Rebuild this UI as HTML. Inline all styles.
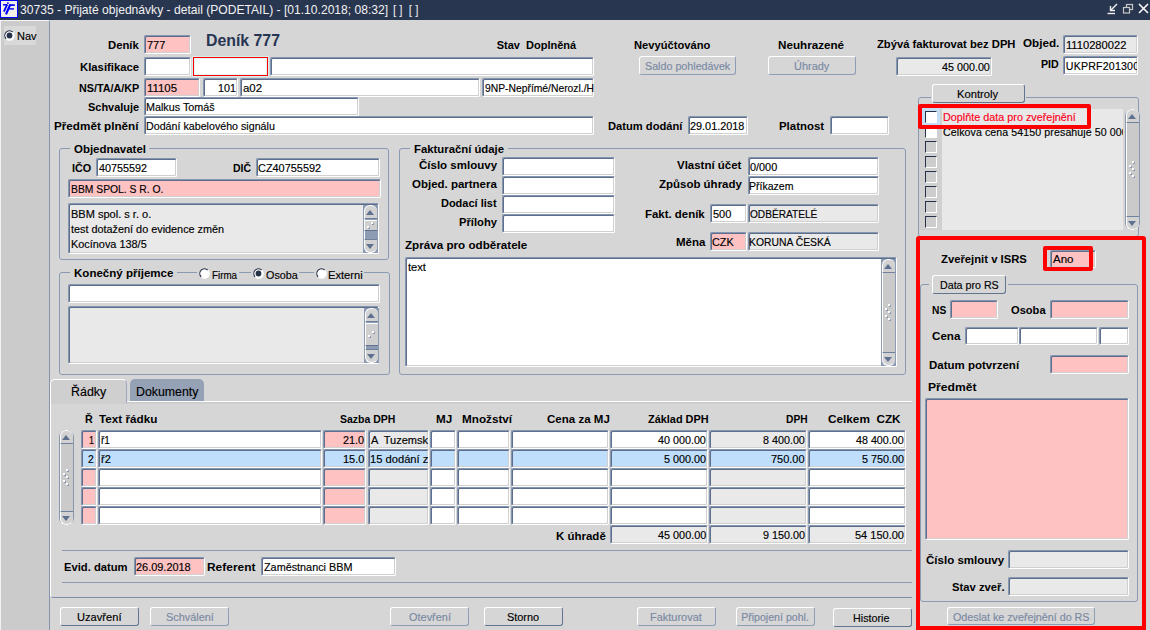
<!DOCTYPE html><html><head><meta charset='utf-8'><style>
*{margin:0;padding:0}
html,body{width:1150px;height:630px;overflow:hidden;background:#d6d6d6;font-family:'Liberation Sans', sans-serif;}
.t{position:absolute;white-space:pre;line-height:13px;font-size:11px;-webkit-text-stroke:0.15px currentColor}
.in{position:absolute;box-sizing:border-box;border-top:1px solid #8696ae;border-left:1px solid #8696ae;border-right:1px solid #fff;border-bottom:1px solid #fff;border-radius:2px;overflow:hidden;box-shadow:inset 1px 1px 0 #5d6f8c, inset -1px -1px 0 #d0d0d0}
.it{position:absolute;left:0;right:0;white-space:pre;font-size:10.6px;line-height:13px;overflow:hidden}
.bt{position:absolute;box-sizing:border-box;border:1px solid #7d8ca6;border-top-color:#fff;border-left-color:#fff;border-radius:3px;background:#d6d6d6}
.bx{position:absolute;left:0;right:0;text-align:center;white-space:pre;font-size:10.8px;line-height:13px}
.grp{position:absolute;box-sizing:border-box;border:1px solid #8a9ab2;border-radius:3px}
</style></head><body><div style="position:absolute;left:0;top:0;width:1150px;height:20px;background:#293650"></div>
<svg style="position:absolute;left:0;top:0" width="19" height="19" viewBox="0 0 19 19">
<rect x="0.5" y="0.5" width="17" height="17" fill="#f3f1e7" stroke="#0000ff" stroke-width="1"/>
<circle cx="7.9" cy="3.1" r="0.95" fill="#0000e8"/>
<g stroke="#0000ff" stroke-linecap="butt" fill="none">
<line x1="3" y1="4.8" x2="7.4" y2="4.8" stroke-width="1.5"/>
<line x1="7.1" y1="4.6" x2="3.9" y2="11.6" stroke-width="1.9"/>
<line x1="10.3" y1="4.4" x2="6.0" y2="14.4" stroke-width="2.2"/>
<line x1="9.2" y1="5.1" x2="14.8" y2="5.1" stroke-width="1.7"/>
<line x1="7.9" y1="8.9" x2="14.0" y2="8.9" stroke-width="1.4"/>
</g></svg>
<div class="t" style="left:19.95px;top:4px;font-weight:normal;font-size:12.2px;color:#f2f2f2;transform:scaleX(0.9923);transform-origin:0 0;-webkit-text-stroke:0">30735 - Přijaté objednávky - detail (PODETAIL) - [01.10.2018; 08:32]</div>
<div class="t" style="left:393.40px;top:4px;font-weight:normal;font-size:12.2px;color:#f2f2f2;transform:scaleX(0.9370);transform-origin:0 0;-webkit-text-stroke:0">[ ]  [ ]</div>
<svg style="position:absolute;left:1100px;top:0" width="50" height="20" viewBox="0 0 50 20">
<g stroke="#f0f0f0" fill="none" stroke-width="1.4">
<line x1="7.5" y1="13.5" x2="15" y2="13.5"/><line x1="17" y1="4" x2="11" y2="10"/><polyline points="10.5,6 10.5,10.5 15,10.5"/>
</g>
<g stroke="#c8c8c8" fill="none" stroke-width="1.2">
<rect x="26.5" y="4.5" width="6" height="5"/><rect x="23.5" y="7.5" width="6" height="5.5" fill="#293650"/>
</g>
<g stroke="#f8f8f8" stroke-width="1.6"><line x1="39" y1="4" x2="48" y2="13"/><line x1="48" y1="4" x2="39" y2="13"/></g>
</svg>
<div style="position:absolute;left:0;top:20px;width:50px;height:610px;box-sizing:border-box;background:#cbcbcb;border-right:1px solid #8395b0;border-top:1px solid #f4f4f4;border-left:1px solid #f2f2f2"></div>
<div style="position:absolute;left:4px;top:26px;width:32px;height:19px;background:#d9d9d9"></div>
<svg style="position:absolute;left:4px;top:30px" width="11" height="11" viewBox="0 0 11 11"><circle cx="5.5" cy="5.5" r="4.6" fill="#fff"/><path d="M 2.2 8.8 A 4.6 4.6 0 0 1 8.8 2.2" stroke="#1f2a40" stroke-width="1.1" fill="none"/><path d="M 8.8 2.2 A 4.6 4.6 0 0 1 2.2 8.8" stroke="#fff" stroke-width="1.1" fill="none"/><circle cx="5.5" cy="5.5" r="2.9" fill="#263248"/></svg>
<div class="t" style="left:17px;top:30px;font-weight:normal;font-size:11px;color:#000;">Nav</div>
<div class="t" style="left:107.63px;top:39px;font-weight:bold;font-size:11px;color:#000;transform:scaleX(1.0274);transform-origin:0 0;-webkit-text-stroke:0;">Deník</div>
<div class="t" style="left:79.63px;top:61px;font-weight:bold;font-size:11px;color:#000;transform:scaleX(1.0293);transform-origin:0 0;-webkit-text-stroke:0;">Klasifikace</div>
<div class="t" style="left:78.67px;top:82px;font-weight:bold;font-size:11px;color:#000;transform:scaleX(0.9768);transform-origin:0 0;-webkit-text-stroke:0;">NS/TA/A/KP</div>
<div class="t" style="left:87.70px;top:101px;font-weight:bold;font-size:11px;color:#000;transform:scaleX(0.9941);transform-origin:0 0;-webkit-text-stroke:0;">Schvaluje</div>
<div class="t" style="left:53.60px;top:120px;font-weight:bold;font-size:11px;color:#000;transform:scaleX(1.0633);transform-origin:0 0;-webkit-text-stroke:0;">Předmět plnění</div>
<div class="in" style="left:144px;top:35px;width:47px;height:19px;background:#fec2c2;"></div>
<div class="t" style="left:146.73px;top:39px;font-weight:normal;font-size:10.6px;color:#000;transform:scaleX(1.0361);transform-origin:0 0;">777</div>
<div class="in" style="left:144px;top:57px;width:47px;height:19px;background:#fff;"></div>
<div style="position:absolute;left:193px;top:57px;width:75px;height:19px;box-sizing:border-box;border:1px solid #f00;background:#fff;box-shadow:0 0 0 1px #d8ecec, inset 0 0 0 1px #e4f4f4"></div>
<div class="in" style="left:270px;top:57px;width:324px;height:19px;background:#fff;"></div>
<div class="in" style="left:144px;top:78px;width:56px;height:19px;background:#fec2c2;"></div>
<div class="t" style="left:146.84px;top:82px;font-weight:normal;font-size:10.6px;color:#000;transform:scaleX(1.0769);transform-origin:0 0;">11105</div>
<div class="in" style="left:203px;top:78px;width:35px;height:19px;background:#fff;"></div>
<div class="t" style="left:218.19px;top:82px;font-weight:normal;font-size:10.6px;color:#000;transform:scaleX(1.0122);transform-origin:0 0;">101</div>
<div class="in" style="left:240px;top:78px;width:240px;height:19px;background:#fff;"></div>
<div class="t" style="left:242.51px;top:82px;font-weight:normal;font-size:10.6px;color:#000;transform:scaleX(1.0778);transform-origin:0 0;">a02</div>
<div class="in" style="left:482px;top:78px;width:112px;height:19px;background:#fff;"></div>
<div class="t" style="left:484.51px;top:82px;font-weight:normal;font-size:10.6px;color:#000;transform:scaleX(0.9742);transform-origin:0 0;">9NP-Nepřímé/Nerozl./H</div>
<div class="in" style="left:144px;top:97px;width:215px;height:19px;background:#fff;"></div>
<div class="t" style="left:146.14px;top:101px;font-weight:normal;font-size:10.6px;color:#000;transform:scaleX(1.0166);transform-origin:0 0;">Malkus Tomáš</div>
<div class="in" style="left:144px;top:116px;width:450px;height:19px;background:#fff;"></div>
<div class="t" style="left:146.14px;top:120px;font-weight:normal;font-size:10.6px;color:#000;transform:scaleX(1.0083);transform-origin:0 0;">Dodání kabelového signálu</div>
<div class="t" style="left:205.5px;top:34px;font-weight:bold;font-size:16px;color:#283552;transform:scaleX(0.99);transform-origin:0 0;-webkit-text-stroke:0">Deník 777</div>
<div class="t" style="left:496.70px;top:39px;font-weight:bold;font-size:11px;color:#000;-webkit-text-stroke:0;">Stav  Doplněná</div>
<div class="t" style="left:633.64px;top:39px;font-weight:bold;font-size:11px;color:#000;transform:scaleX(1.0162);transform-origin:0 0;-webkit-text-stroke:0;">Nevyúčtováno</div>
<div class="t" style="left:777.81px;top:39px;font-weight:bold;font-size:11px;color:#000;transform:scaleX(1.0596);transform-origin:0 0;-webkit-text-stroke:0;">Neuhrazené</div>
<div class="t" style="left:876.69px;top:38px;font-weight:bold;font-size:11px;color:#000;transform:scaleX(1.0204);transform-origin:0 0;-webkit-text-stroke:0;">Zbývá fakturovat bez DPH</div>
<div class="t" style="left:1022.52px;top:37px;font-weight:bold;font-size:11px;color:#000;transform:scaleX(1.0606);transform-origin:0 0;-webkit-text-stroke:0;">Objed.</div>
<div class="t" style="left:1040.67px;top:58px;font-weight:bold;font-size:11px;color:#000;transform:scaleX(0.9679);transform-origin:0 0;-webkit-text-stroke:0;">PID</div>
<div class="in" style="left:1063px;top:35px;width:75px;height:19px;background:#e9e9e9;"></div>
<div class="t" style="left:1065.76px;top:39px;font-weight:normal;font-size:10.6px;color:#000;transform:scaleX(1.0526);transform-origin:0 0;">1110280022</div>
<div class="in" style="left:1063px;top:56px;width:75px;height:19px;background:#fff;"></div>
<div style="position:absolute;left:1065px;top:58px;width:72px;height:16px;overflow:hidden"><div style="position:absolute;left:-1065px;top:-58px;width:1150px;height:630px"><div class="t" style="left:1065.80px;top:60px;font-weight:normal;font-size:10.6px;color:#000;letter-spacing:0.2px">UKPRF20130001</div></div></div>
<div class="bt" style="left:639px;top:56px;width:97px;height:19px;border-right-color:#8d9db5;border-bottom-color:#8d9db5"><div class="bx" style="top:4px;color:#7a89a3"></div></div>
<div class="t" style="left:645.09px;top:60px;font-weight:normal;font-size:10.6px;color:#7a89a3;transform:scaleX(1.0119);transform-origin:0 0;">Saldo pohledávek</div>
<div class="bt" style="left:768px;top:56px;width:88px;height:19px;border-right-color:#8d9db5;border-bottom-color:#8d9db5"><div class="bx" style="top:4px;color:#7a89a3"></div></div>
<div class="t" style="left:793.57px;top:60px;font-weight:normal;font-size:10.6px;color:#7a89a3;transform:scaleX(1.0345);transform-origin:0 0;">Úhrady</div>
<div class="in" style="left:896px;top:57px;width:96px;height:19px;background:#e9e9e9;"></div>
<div class="t" style="left:942.15px;top:61px;font-weight:normal;font-size:10.6px;color:#000;transform:scaleX(1.0151);transform-origin:0 0;">45 000.00</div>
<div class="t" style="left:607.64px;top:120px;font-weight:bold;font-size:11px;color:#000;transform:scaleX(1.0151);transform-origin:0 0;-webkit-text-stroke:0;">Datum dodání</div>
<div class="in" style="left:688px;top:116px;width:60px;height:19px;background:#fff;"></div>
<div class="t" style="left:690.44px;top:120px;font-weight:normal;font-size:10.6px;color:#000;transform:scaleX(1.0259);transform-origin:0 0;">29.01.2018</div>
<div class="t" style="left:778.62px;top:120px;font-weight:bold;font-size:11px;color:#000;transform:scaleX(1.0388);transform-origin:0 0;-webkit-text-stroke:0;">Platnost</div>
<div class="in" style="left:830px;top:116px;width:59px;height:19px;background:#fff;"></div>
<div class="grp" style="left:59px;top:148px;width:330px;height:112px"></div>
<div style="position:absolute;left:70px;top:147px;width:79px;height:3px;background:#d6d6d6"></div>
<div class="t" style="left:73.63px;top:143px;font-weight:bold;font-size:11px;color:#000;transform:scaleX(1.0420);transform-origin:0 0;-webkit-text-stroke:0;">Objednavatel</div>
<div class="t" style="left:72.26px;top:162px;font-weight:bold;font-size:11px;color:#000;transform:scaleX(0.9864);transform-origin:0 0;-webkit-text-stroke:0;">IČO</div>
<div class="in" style="left:96px;top:158px;width:81px;height:19px;background:#fff;"></div>
<div class="t" style="left:99.14px;top:162px;font-weight:normal;font-size:10.6px;color:#000;transform:scaleX(1.0205);transform-origin:0 0;">40755592</div>
<div class="t" style="left:233.29px;top:162px;font-weight:bold;font-size:11px;color:#000;transform:scaleX(0.9497);transform-origin:0 0;-webkit-text-stroke:0;">DIČ</div>
<div class="in" style="left:256px;top:158px;width:124px;height:19px;background:#fff;"></div>
<div class="t" style="left:258.43px;top:162px;font-weight:normal;font-size:10.6px;color:#000;transform:scaleX(1.0299);transform-origin:0 0;">CZ40755592</div>
<div class="in" style="left:68px;top:179px;width:313px;height:19px;background:#fec2c2;"></div>
<div class="t" style="left:70.57px;top:183px;font-weight:normal;font-size:10.6px;color:#000;transform:scaleX(0.9758);transform-origin:0 0;">BBM SPOL. S R. O.</div>
<div class="in" style="left:68px;top:203px;width:311px;height:51px;background:#e9e9e9;"></div>
<div class="t" style="left:70.72px;top:208px;font-weight:normal;font-size:10.6px;color:#000;transform:scaleX(1.0398);transform-origin:0 0;">BBM spol. s r. o.</div>
<div class="t" style="left:71.45px;top:223px;font-weight:normal;font-size:10.6px;color:#000;transform:scaleX(1.0238);transform-origin:0 0;">test dotažení do evidence změn</div>
<div class="t" style="left:70.73px;top:238px;font-weight:normal;font-size:10.6px;color:#000;transform:scaleX(1.0283);transform-origin:0 0;">Kocínova 138/5</div>
<div style="position:absolute;left:363px;top:205px;width:15px;height:48px;background:#8d9bb3"></div>
<div style="position:absolute;left:364px;top:218px;width:13px;height:22px;box-sizing:border-box;background:#8d9bb3;border-left:1px solid #fff"></div>
<div style="position:absolute;left:364px;top:205px;width:13px;height:14px;box-sizing:border-box;background:#d2d2d2;border-top:1px solid #fff;border-left:1px solid #fff;border-bottom:1px solid #6f809c;border-radius:6px 6px 0 0"></div>
<div style="position:absolute;left:366px;top:210px;width:0;height:0;border-left:4.5px solid transparent;border-right:4.5px solid transparent;border-bottom:5px solid #5f7190"></div>
<div style="position:absolute;left:364px;top:239px;width:13px;height:14px;box-sizing:border-box;background:#d2d2d2;border-top:1px solid #6f809c;border-left:1px solid #fff;border-bottom:1px solid #fff;border-radius:0 0 6px 6px"></div>
<div style="position:absolute;left:366px;top:244px;width:0;height:0;border-left:4.5px solid transparent;border-right:4.5px solid transparent;border-top:5px solid #5f7190"></div>
<div style="position:absolute;left:364px;top:220px;width:13px;height:11px;box-sizing:border-box;background:#cfcfcf;border-top:1px solid #fff;border-left:1px solid #fff;border-bottom:1px solid #5f7190"></div>
<div style="position:absolute;left:367px;top:226px;width:2px;height:2px;background:#fff;box-shadow:1px 1px 0 #8d9bb3"></div>
<div style="position:absolute;left:371px;top:222px;width:2px;height:2px;background:#fff;box-shadow:1px 1px 0 #8d9bb3"></div>
<div class="grp" style="left:59px;top:272px;width:331px;height:103px"></div>
<div style="position:absolute;left:70px;top:271px;width:107px;height:3px;background:#d6d6d6"></div>
<div style="position:absolute;left:197px;top:271px;width:42px;height:3px;background:#d6d6d6"></div>
<div style="position:absolute;left:251px;top:271px;width:48px;height:3px;background:#d6d6d6"></div>
<div style="position:absolute;left:314px;top:271px;width:50px;height:3px;background:#d6d6d6"></div>
<div class="t" style="left:73.61px;top:267px;font-weight:bold;font-size:11px;color:#000;transform:scaleX(1.0497);transform-origin:0 0;-webkit-text-stroke:0;">Konečný příjemce</div>
<svg style="position:absolute;left:199px;top:268px" width="11" height="11" viewBox="0 0 11 11"><circle cx="5.5" cy="5.5" r="4.6" fill="#fff"/><path d="M 2.2 8.8 A 4.6 4.6 0 0 1 8.8 2.2" stroke="#1f2a40" stroke-width="1.1" fill="none"/><path d="M 8.8 2.2 A 4.6 4.6 0 0 1 2.2 8.8" stroke="#fff" stroke-width="1.1" fill="none"/></svg>
<div class="t" style="left:211.91px;top:269px;font-weight:normal;font-size:10.6px;color:#000;transform:scaleX(0.9257);transform-origin:0 0;">Firma</div>
<svg style="position:absolute;left:253px;top:268px" width="11" height="11" viewBox="0 0 11 11"><circle cx="5.5" cy="5.5" r="4.6" fill="#fff"/><path d="M 2.2 8.8 A 4.6 4.6 0 0 1 8.8 2.2" stroke="#1f2a40" stroke-width="1.1" fill="none"/><path d="M 8.8 2.2 A 4.6 4.6 0 0 1 2.2 8.8" stroke="#fff" stroke-width="1.1" fill="none"/><circle cx="5.5" cy="5.5" r="2.9" fill="#263248"/></svg>
<div class="t" style="left:265.89px;top:269px;font-weight:normal;font-size:10.6px;color:#000;transform:scaleX(1.0179);transform-origin:0 0;">Osoba</div>
<svg style="position:absolute;left:316px;top:268px" width="11" height="11" viewBox="0 0 11 11"><circle cx="5.5" cy="5.5" r="4.6" fill="#fff"/><path d="M 2.2 8.8 A 4.6 4.6 0 0 1 8.8 2.2" stroke="#1f2a40" stroke-width="1.1" fill="none"/><path d="M 8.8 2.2 A 4.6 4.6 0 0 1 2.2 8.8" stroke="#fff" stroke-width="1.1" fill="none"/></svg>
<div class="t" style="left:328.11px;top:269px;font-weight:normal;font-size:10.6px;color:#000;transform:scaleX(1.0525);transform-origin:0 0;">Externi</div>
<div class="in" style="left:68px;top:284px;width:312px;height:19px;background:#fff;"></div>
<div class="in" style="left:68px;top:306px;width:311px;height:58px;background:#e9e9e9;"></div>
<div style="position:absolute;left:364px;top:308px;width:15px;height:55px;background:#8d9bb3"></div>
<div style="position:absolute;left:365px;top:321px;width:13px;height:29px;box-sizing:border-box;background:#8d9bb3;border-left:1px solid #fff"></div>
<div style="position:absolute;left:365px;top:308px;width:13px;height:14px;box-sizing:border-box;background:#d2d2d2;border-top:1px solid #fff;border-left:1px solid #fff;border-bottom:1px solid #6f809c;border-radius:6px 6px 0 0"></div>
<div style="position:absolute;left:367px;top:313px;width:0;height:0;border-left:4.5px solid transparent;border-right:4.5px solid transparent;border-bottom:5px solid #5f7190"></div>
<div style="position:absolute;left:365px;top:349px;width:13px;height:14px;box-sizing:border-box;background:#d2d2d2;border-top:1px solid #6f809c;border-left:1px solid #fff;border-bottom:1px solid #fff;border-radius:0 0 6px 6px"></div>
<div style="position:absolute;left:367px;top:354px;width:0;height:0;border-left:4.5px solid transparent;border-right:4.5px solid transparent;border-top:5px solid #5f7190"></div>
<div style="position:absolute;left:365px;top:323px;width:13px;height:23px;box-sizing:border-box;background:#cfcfcf;border-top:1px solid #fff;border-left:1px solid #fff;border-bottom:1px solid #5f7190"></div>
<div style="position:absolute;left:368px;top:335px;width:2px;height:2px;background:#fff;box-shadow:1px 1px 0 #8d9bb3"></div>
<div style="position:absolute;left:372px;top:331px;width:2px;height:2px;background:#fff;box-shadow:1px 1px 0 #8d9bb3"></div>
<div class="grp" style="left:399px;top:148px;width:507px;height:227px"></div>
<div style="position:absolute;left:410px;top:147px;width:98px;height:3px;background:#d6d6d6"></div>
<div class="t" style="left:413.63px;top:143px;font-weight:bold;font-size:11px;color:#000;transform:scaleX(1.0301);transform-origin:0 0;-webkit-text-stroke:0;">Fakturační údaje</div>
<div class="t" style="left:418.73px;top:159px;font-weight:bold;font-size:11px;color:#000;transform:scaleX(1.0466);transform-origin:0 0;-webkit-text-stroke:0;">Číslo smlouvy</div>
<div class="in" style="left:502px;top:157px;width:113px;height:19px;background:#fff;"></div>
<div class="t" style="left:411.73px;top:178px;font-weight:bold;font-size:11px;color:#000;transform:scaleX(1.0439);transform-origin:0 0;-webkit-text-stroke:0;">Objed. partnera</div>
<div class="in" style="left:502px;top:176px;width:113px;height:19px;background:#fff;"></div>
<div class="t" style="left:440.95px;top:197px;font-weight:bold;font-size:11px;color:#000;-webkit-text-stroke:0;">Dodací list</div>
<div class="in" style="left:502px;top:195px;width:113px;height:19px;background:#fff;"></div>
<div class="t" style="left:458.94px;top:216px;font-weight:bold;font-size:11px;color:#000;transform:scaleX(1.0178);transform-origin:0 0;-webkit-text-stroke:0;">Přílohy</div>
<div class="in" style="left:502px;top:214px;width:113px;height:19px;background:#fff;"></div>
<div class="t" style="left:404.78px;top:239px;font-weight:bold;font-size:11px;color:#000;transform:scaleX(1.0588);transform-origin:0 0;-webkit-text-stroke:0;">Zpráva pro odběratele</div>
<div class="t" style="left:677.40px;top:159px;font-weight:bold;font-size:11px;color:#000;transform:scaleX(1.0431);transform-origin:0 0;-webkit-text-stroke:0;">Vlastní účet</div>
<div class="in" style="left:748px;top:157px;width:131px;height:19px;background:#fff;"></div>
<div class="t" style="left:749.59px;top:161px;font-weight:normal;font-size:10.6px;color:#000;transform:scaleX(1.0252);transform-origin:0 0;">0/000</div>
<div class="t" style="left:658.89px;top:178px;font-weight:bold;font-size:11px;color:#000;transform:scaleX(1.0430);transform-origin:0 0;-webkit-text-stroke:0;">Způsob úhrady</div>
<div class="in" style="left:748px;top:176px;width:131px;height:19px;background:#fff;"></div>
<div class="t" style="left:749.15px;top:180px;font-weight:normal;font-size:10.6px;color:#000;transform:scaleX(0.9942);transform-origin:0 0;">Příkazem</div>
<div class="t" style="left:644.52px;top:208px;font-weight:bold;font-size:11px;color:#000;transform:scaleX(1.0388);transform-origin:0 0;-webkit-text-stroke:0;">Fakt. deník</div>
<div class="in" style="left:710px;top:204px;width:37px;height:19px;background:#fff;"></div>
<div class="t" style="left:712.83px;top:208px;font-weight:normal;font-size:10.6px;color:#000;transform:scaleX(1.0386);transform-origin:0 0;">500</div>
<div class="in" style="left:748px;top:204px;width:131px;height:19px;background:#e9e9e9;"></div>
<div class="t" style="left:749.52px;top:208px;font-weight:normal;font-size:10.6px;color:#000;transform:scaleX(0.9554);transform-origin:0 0;">ODBĚRATELÉ</div>
<div class="t" style="left:675.91px;top:236px;font-weight:bold;font-size:11px;color:#000;transform:scaleX(1.0492);transform-origin:0 0;-webkit-text-stroke:0;">Měna</div>
<div class="in" style="left:710px;top:232px;width:37px;height:19px;background:#fec2c2;"></div>
<div class="t" style="left:712.44px;top:236px;font-weight:normal;font-size:10.6px;color:#000;transform:scaleX(1.0219);transform-origin:0 0;">CZK</div>
<div class="in" style="left:748px;top:232px;width:131px;height:19px;background:#e9e9e9;"></div>
<div class="t" style="left:749.17px;top:236px;font-weight:normal;font-size:10.6px;color:#000;transform:scaleX(0.9783);transform-origin:0 0;">KORUNA ČESKÁ</div>
<div class="in" style="left:405px;top:257px;width:492px;height:110px;background:#fff;"></div>
<div class="t" style="left:408.14px;top:261px;font-weight:normal;font-size:10.6px;color:#000;transform:scaleX(1.0504);transform-origin:0 0;">text</div>
<div style="position:absolute;left:881px;top:259px;width:15px;height:107px;background:#8d9bb3"></div>
<div style="position:absolute;left:882px;top:272px;width:13px;height:81px;box-sizing:border-box;background:#cacaca;border-left:1px solid #fff"></div>
<div style="position:absolute;left:882px;top:259px;width:13px;height:14px;box-sizing:border-box;background:#d2d2d2;border-top:1px solid #fff;border-left:1px solid #fff;border-bottom:1px solid #6f809c;border-radius:6px 6px 0 0"></div>
<div style="position:absolute;left:884px;top:264px;width:0;height:0;border-left:4.5px solid transparent;border-right:4.5px solid transparent;border-bottom:5px solid #5f7190"></div>
<div style="position:absolute;left:882px;top:352px;width:13px;height:14px;box-sizing:border-box;background:#d2d2d2;border-top:1px solid #6f809c;border-left:1px solid #fff;border-bottom:1px solid #fff;border-radius:0 0 6px 6px"></div>
<div style="position:absolute;left:884px;top:357px;width:0;height:0;border-left:4.5px solid transparent;border-right:4.5px solid transparent;border-top:5px solid #5f7190"></div>
<div style="position:absolute;left:888px;top:304px;width:2px;height:2px;background:#fff;box-shadow:1px 1px 0 #8d9bb3"></div>
<div style="position:absolute;left:885px;top:308px;width:2px;height:2px;background:#fff;box-shadow:1px 1px 0 #8d9bb3"></div>
<div style="position:absolute;left:888px;top:311px;width:2px;height:2px;background:#fff;box-shadow:1px 1px 0 #8d9bb3"></div>
<div style="position:absolute;left:885px;top:315px;width:2px;height:2px;background:#fff;box-shadow:1px 1px 0 #8d9bb3"></div>
<div style="position:absolute;left:888px;top:318px;width:2px;height:2px;background:#fff;box-shadow:1px 1px 0 #8d9bb3"></div>
<div class="grp" style="left:918px;top:97px;width:221px;height:140px"></div>
<div style="position:absolute;left:931px;top:96px;width:95px;height:3px;background:#d6d6d6"></div>
<div class="bt" style="left:932px;top:84px;width:93px;height:19px;border-right-color:#62748f;border-bottom-color:#62748f"><div class="bx" style="top:4px;color:#000"></div></div>
<div class="t" style="left:957.10px;top:88px;font-weight:normal;font-size:10.6px;color:#000;transform:scaleX(1.0565);transform-origin:0 0;">Kontroly</div>
<div style="position:absolute;left:919px;top:109px;width:23px;height:121px;box-sizing:border-box;background:#d0d0d0"></div>
<div style="position:absolute;left:942px;top:109px;width:181px;height:121px;box-sizing:border-box;background:#e8e8e8"></div>
<div style="position:absolute;left:922px;top:108px;width:18px;height:17px;box-sizing:border-box;background:#c4def6"></div>
<div style="position:absolute;left:925px;top:111px;width:12px;height:12px;box-sizing:border-box;background:#fff;border-top:1px solid #27324a;border-left:1px solid #27324a;border-right:1px solid #fff;border-bottom:1px solid #fff"></div>
<div style="position:absolute;left:925px;top:126px;width:12px;height:12px;box-sizing:border-box;background:#fff;border-top:1px solid #27324a;border-left:1px solid #27324a;border-right:1px solid #fff;border-bottom:1px solid #fff"></div>
<div style="position:absolute;left:925px;top:141px;width:12px;height:12px;box-sizing:border-box;background:#cdcdcd;border-top:1px solid #27324a;border-left:1px solid #27324a;border-right:1px solid #fff;border-bottom:1px solid #fff"></div>
<div style="position:absolute;left:925px;top:156px;width:12px;height:12px;box-sizing:border-box;background:#cdcdcd;border-top:1px solid #27324a;border-left:1px solid #27324a;border-right:1px solid #fff;border-bottom:1px solid #fff"></div>
<div style="position:absolute;left:925px;top:171px;width:12px;height:12px;box-sizing:border-box;background:#cdcdcd;border-top:1px solid #27324a;border-left:1px solid #27324a;border-right:1px solid #fff;border-bottom:1px solid #fff"></div>
<div style="position:absolute;left:925px;top:186px;width:12px;height:12px;box-sizing:border-box;background:#cdcdcd;border-top:1px solid #27324a;border-left:1px solid #27324a;border-right:1px solid #fff;border-bottom:1px solid #fff"></div>
<div style="position:absolute;left:925px;top:201px;width:12px;height:12px;box-sizing:border-box;background:#cdcdcd;border-top:1px solid #27324a;border-left:1px solid #27324a;border-right:1px solid #fff;border-bottom:1px solid #fff"></div>
<div style="position:absolute;left:925px;top:216px;width:12px;height:12px;box-sizing:border-box;background:#cdcdcd;border-top:1px solid #27324a;border-left:1px solid #27324a;border-right:1px solid #fff;border-bottom:1px solid #fff"></div>
<div class="t" style="left:942.63px;top:111px;font-weight:normal;font-size:10.6px;color:#ff0018;transform:scaleX(1.0205);transform-origin:0 0;">Doplňte data pro zveřejnění</div>
<div style="position:absolute;left:942px;top:122px;width:181px;height:16px;overflow:hidden"><div style="position:absolute;left:-942px;top:-122px;width:1150px;height:630px"><div class="t" style="left:942.95px;top:126px;font-weight:normal;font-size:10.6px;color:#000;letter-spacing:0.1px">Celkova cena 54150 presahuje 50 000 Kč</div></div></div>
<div style="position:absolute;left:1125px;top:109px;width:15px;height:121px;box-sizing:border-box;background:#cacaca;border:1px solid #8797b0;border-radius:7px;box-shadow:inset 1px 0 0 #fff"></div>
<div style="position:absolute;left:1126px;top:109px;width:13px;height:14px;box-sizing:border-box;background:#d2d2d2;border-top:1px solid #fff;border-left:1px solid #fff;border-bottom:1px solid #6f809c;border-radius:6px 6px 0 0"></div>
<div style="position:absolute;left:1128px;top:114px;width:0;height:0;border-left:4.5px solid transparent;border-right:4.5px solid transparent;border-bottom:5px solid #5f7190"></div>
<div style="position:absolute;left:1126px;top:216px;width:13px;height:14px;box-sizing:border-box;background:#d2d2d2;border-top:1px solid #6f809c;border-left:1px solid #fff;border-bottom:1px solid #fff;border-radius:0 0 6px 6px"></div>
<div style="position:absolute;left:1128px;top:221px;width:0;height:0;border-left:4.5px solid transparent;border-right:4.5px solid transparent;border-top:5px solid #5f7190"></div>
<div style="position:absolute;left:1132px;top:161px;width:2px;height:2px;background:#fff;box-shadow:1px 1px 0 #8d9bb3"></div>
<div style="position:absolute;left:1129px;top:165px;width:2px;height:2px;background:#fff;box-shadow:1px 1px 0 #8d9bb3"></div>
<div style="position:absolute;left:1132px;top:168px;width:2px;height:2px;background:#fff;box-shadow:1px 1px 0 #8d9bb3"></div>
<div style="position:absolute;left:1129px;top:172px;width:2px;height:2px;background:#fff;box-shadow:1px 1px 0 #8d9bb3"></div>
<div style="position:absolute;left:1132px;top:175px;width:2px;height:2px;background:#fff;box-shadow:1px 1px 0 #8d9bb3"></div>
<div style="position:absolute;left:918px;top:104px;width:173px;height:25px;box-sizing:border-box;border:4px solid #f00;border-radius:2px"></div>
<div class="t" style="left:940.79px;top:253px;font-weight:bold;font-size:11px;color:#000;transform:scaleX(1.0253);transform-origin:0 0;-webkit-text-stroke:0;">Zveřejnit v ISRS</div>
<div class="in" style="left:1050px;top:250px;width:46px;height:18px;background:#fec2c2;"></div>
<div class="t" style="left:1052.95px;top:253px;font-weight:normal;font-size:10.6px;color:#000;transform:scaleX(1.0899);transform-origin:0 0;">Ano</div>
<div style="position:absolute;left:1043px;top:246px;width:50px;height:25px;box-sizing:border-box;border:4px solid #f00;border-radius:2px"></div>
<div class="grp" style="left:920px;top:284px;width:218px;height:318px"></div>
<div style="position:absolute;left:929px;top:283px;width:79px;height:3px;background:#d6d6d6"></div>
<div class="bt" style="left:932px;top:275px;width:74px;height:19px;border-right-color:#62748f;border-bottom-color:#62748f"><div class="bx" style="top:4px;color:#000"></div></div>
<div class="t" style="left:939.64px;top:279px;font-weight:normal;font-size:10.6px;color:#000;transform:scaleX(1.0070);transform-origin:0 0;">Data pro RS</div>
<div class="t" style="left:932.00px;top:304px;font-weight:bold;font-size:11px;color:#000;transform:scaleX(0.9291);transform-origin:0 0;-webkit-text-stroke:0;">NS</div>
<div class="in" style="left:950px;top:300px;width:48px;height:19px;background:#fec2c2;"></div>
<div class="t" style="left:1010.85px;top:304px;font-weight:bold;font-size:11px;color:#000;transform:scaleX(1.0103);transform-origin:0 0;-webkit-text-stroke:0;">Osoba</div>
<div class="in" style="left:1050px;top:300px;width:79px;height:19px;background:#fec2c2;"></div>
<div class="t" style="left:931.53px;top:330px;font-weight:bold;font-size:11px;color:#000;transform:scaleX(1.0546);transform-origin:0 0;-webkit-text-stroke:0;">Cena</div>
<div class="in" style="left:965px;top:327px;width:54px;height:18px;background:#fff;"></div>
<div class="in" style="left:1019px;top:327px;width:79px;height:18px;background:#fff;"></div>
<div class="in" style="left:1099px;top:327px;width:30px;height:18px;background:#fff;"></div>
<div class="t" style="left:928.62px;top:359px;font-weight:bold;font-size:11px;color:#000;transform:scaleX(1.0455);transform-origin:0 0;-webkit-text-stroke:0;">Datum potvrzení</div>
<div class="in" style="left:1050px;top:355px;width:79px;height:19px;background:#fec2c2;"></div>
<div class="t" style="left:927.77px;top:381px;font-weight:bold;font-size:11px;color:#000;transform:scaleX(1.1008);transform-origin:0 0;-webkit-text-stroke:0;">Předmět</div>
<div class="in" style="left:925px;top:398px;width:204px;height:142px;background:#fec2c2;"></div>
<div class="t" style="left:925.53px;top:554px;font-weight:bold;font-size:11px;color:#000;transform:scaleX(1.0479);transform-origin:0 0;-webkit-text-stroke:0;">Číslo smlouvy</div>
<div class="in" style="left:1008px;top:550px;width:121px;height:19px;background:#e9e9e9;"></div>
<div class="t" style="left:951.79px;top:581px;font-weight:bold;font-size:11px;color:#000;transform:scaleX(1.0239);transform-origin:0 0;-webkit-text-stroke:0;">Stav zveř.</div>
<div class="in" style="left:1008px;top:577px;width:121px;height:19px;background:#e9e9e9;"></div>
<div class="bt" style="left:947px;top:607px;width:148px;height:18px;border-right-color:#8d9db5;border-bottom-color:#8d9db5"><div class="bx" style="top:4px;color:#7a89a3"></div></div>
<div class="t" style="left:952.89px;top:611px;font-weight:normal;font-size:10.6px;color:#7a89a3;transform:scaleX(1.0123);transform-origin:0 0;">Odeslat ke zveřejnění do RS</div>
<div style="position:absolute;left:916px;top:236px;width:230px;height:394px;box-sizing:border-box;border:4px solid #f00;border-radius:3px 3px 0 0"></div>
<div style="position:absolute;left:50px;top:401px;width:862px;height:197px;box-sizing:border-box;background:#d6d6d6;box-shadow:inset 0 1px 0 #c9c9c9, inset 0 2px 0 #d0d0d0;border-top:1px solid #fff;border-left:1px solid #fff;border-bottom:1px solid #7d8ca6;border-radius:0 0 0 4px"></div>
<div style="position:absolute;left:50px;top:379px;width:77px;height:24px;box-sizing:border-box;background:#cfcfcf;border-top:1px solid #fff;border-left:1px solid #fff;border-right:1px solid #9aa8bc;border-radius:5px 5px 0 0"></div>
<div class="t" style="left:70.57px;top:386px;font-weight:normal;font-size:12px;color:#000;transform:scaleX(1.0349);transform-origin:0 0;">Řádky</div>
<div style="position:absolute;left:130px;top:379px;width:74px;height:22px;background:#95a1b5;border-radius:5px 5px 0 0"></div>
<div class="t" style="left:136.47px;top:386px;font-weight:normal;font-size:12px;color:#000;transform:scaleX(1.0277);transform-origin:0 0;">Dokumenty</div>
<div class="t" style="left:84.57px;top:413px;font-weight:bold;font-size:11px;color:#000;transform:scaleX(0.9784);transform-origin:0 0;-webkit-text-stroke:0;">Ř</div>
<div class="t" style="left:98.69px;top:413px;font-weight:bold;font-size:11px;color:#000;transform:scaleX(1.0648);transform-origin:0 0;-webkit-text-stroke:0;">Text řádku</div>
<div class="t" style="left:339.71px;top:413px;font-weight:bold;font-size:11px;color:#000;transform:scaleX(0.9535);transform-origin:0 0;-webkit-text-stroke:0;">Sazba DPH</div>
<div class="t" style="left:435.60px;top:413px;font-weight:bold;font-size:11px;color:#000;transform:scaleX(1.0618);transform-origin:0 0;-webkit-text-stroke:0;">MJ</div>
<div class="t" style="left:461.60px;top:413px;font-weight:bold;font-size:11px;color:#000;transform:scaleX(1.0644);transform-origin:0 0;-webkit-text-stroke:0;">Množství</div>
<div class="t" style="left:546.53px;top:413px;font-weight:bold;font-size:11px;color:#000;transform:scaleX(1.0494);transform-origin:0 0;-webkit-text-stroke:0;">Cena za MJ</div>
<div class="t" style="left:647.70px;top:413px;font-weight:bold;font-size:11px;color:#000;transform:scaleX(0.9917);transform-origin:0 0;-webkit-text-stroke:0;">Základ DPH</div>
<div class="t" style="left:785.70px;top:413px;font-weight:bold;font-size:11px;color:#000;transform:scaleX(0.9287);transform-origin:0 0;-webkit-text-stroke:0;">DPH</div>
<div class="t" style="left:827.52px;top:413px;font-weight:bold;font-size:11px;color:#000;transform:scaleX(1.0698);transform-origin:0 0;-webkit-text-stroke:0;">Celkem  CZK</div>
<div class="in" style="left:81px;top:430px;width:16px;height:19px;background:#fec2c2;"></div>
<div class="in" style="left:98px;top:430px;width:224px;height:19px;background:#fff;"></div>
<div class="in" style="left:323px;top:430px;width:43px;height:19px;background:#fec2c2;"></div>
<div class="in" style="left:368px;top:430px;width:61px;height:19px;background:#e9e9e9;"></div>
<div class="in" style="left:430px;top:430px;width:26px;height:19px;background:#fff;"></div>
<div class="in" style="left:457px;top:430px;width:53px;height:19px;background:#fff;"></div>
<div class="in" style="left:511px;top:430px;width:98px;height:19px;background:#fff;"></div>
<div class="in" style="left:610px;top:430px;width:98px;height:19px;background:#fff;"></div>
<div class="in" style="left:709px;top:430px;width:98px;height:19px;background:#e9e9e9;"></div>
<div class="in" style="left:808px;top:430px;width:98px;height:19px;background:#fff;"></div>
<div class="in" style="left:81px;top:449px;width:16px;height:19px;background:#bfdefc;"></div>
<div class="in" style="left:98px;top:449px;width:224px;height:19px;background:#bfdefc;"></div>
<div class="in" style="left:323px;top:449px;width:43px;height:19px;background:#bfdefc;"></div>
<div class="in" style="left:368px;top:449px;width:61px;height:19px;background:#bfdefc;"></div>
<div class="in" style="left:430px;top:449px;width:26px;height:19px;background:#bfdefc;"></div>
<div class="in" style="left:457px;top:449px;width:53px;height:19px;background:#bfdefc;"></div>
<div class="in" style="left:511px;top:449px;width:98px;height:19px;background:#bfdefc;"></div>
<div class="in" style="left:610px;top:449px;width:98px;height:19px;background:#bfdefc;"></div>
<div class="in" style="left:709px;top:449px;width:98px;height:19px;background:#bfdefc;"></div>
<div class="in" style="left:808px;top:449px;width:98px;height:19px;background:#bfdefc;"></div>
<div class="in" style="left:81px;top:468px;width:16px;height:19px;background:#fec2c2;"></div>
<div class="in" style="left:98px;top:468px;width:224px;height:19px;background:#fff;"></div>
<div class="in" style="left:323px;top:468px;width:43px;height:19px;background:#fec2c2;"></div>
<div class="in" style="left:368px;top:468px;width:61px;height:19px;background:#e9e9e9;"></div>
<div class="in" style="left:430px;top:468px;width:26px;height:19px;background:#fff;"></div>
<div class="in" style="left:457px;top:468px;width:53px;height:19px;background:#fff;"></div>
<div class="in" style="left:511px;top:468px;width:98px;height:19px;background:#fff;"></div>
<div class="in" style="left:610px;top:468px;width:98px;height:19px;background:#fff;"></div>
<div class="in" style="left:709px;top:468px;width:98px;height:19px;background:#e9e9e9;"></div>
<div class="in" style="left:808px;top:468px;width:98px;height:19px;background:#fff;"></div>
<div class="in" style="left:81px;top:487px;width:16px;height:19px;background:#fec2c2;"></div>
<div class="in" style="left:98px;top:487px;width:224px;height:19px;background:#fff;"></div>
<div class="in" style="left:323px;top:487px;width:43px;height:19px;background:#fec2c2;"></div>
<div class="in" style="left:368px;top:487px;width:61px;height:19px;background:#e9e9e9;"></div>
<div class="in" style="left:430px;top:487px;width:26px;height:19px;background:#fff;"></div>
<div class="in" style="left:457px;top:487px;width:53px;height:19px;background:#fff;"></div>
<div class="in" style="left:511px;top:487px;width:98px;height:19px;background:#fff;"></div>
<div class="in" style="left:610px;top:487px;width:98px;height:19px;background:#fff;"></div>
<div class="in" style="left:709px;top:487px;width:98px;height:19px;background:#e9e9e9;"></div>
<div class="in" style="left:808px;top:487px;width:98px;height:19px;background:#fff;"></div>
<div class="in" style="left:81px;top:506px;width:16px;height:19px;background:#fec2c2;"></div>
<div class="in" style="left:98px;top:506px;width:224px;height:19px;background:#fff;"></div>
<div class="in" style="left:323px;top:506px;width:43px;height:19px;background:#fec2c2;"></div>
<div class="in" style="left:368px;top:506px;width:61px;height:19px;background:#e9e9e9;"></div>
<div class="in" style="left:430px;top:506px;width:26px;height:19px;background:#fff;"></div>
<div class="in" style="left:457px;top:506px;width:53px;height:19px;background:#fff;"></div>
<div class="in" style="left:511px;top:506px;width:98px;height:19px;background:#fff;"></div>
<div class="in" style="left:610px;top:506px;width:98px;height:19px;background:#fff;"></div>
<div class="in" style="left:709px;top:506px;width:98px;height:19px;background:#e9e9e9;"></div>
<div class="in" style="left:808px;top:506px;width:98px;height:19px;background:#fff;"></div>
<div class="t" style="left:89.12px;top:434px;font-weight:normal;font-size:10.6px;color:#000;transform:scaleX(0.8478);transform-origin:0 0;">1</div>
<div class="t" style="left:100.82px;top:434px;font-weight:normal;font-size:10.6px;color:#000;transform:scaleX(0.9480);transform-origin:0 0;">ř1</div>
<div class="t" style="left:342.84px;top:434px;font-weight:normal;font-size:10.6px;color:#000;transform:scaleX(1.0254);transform-origin:0 0;">21.0</div>
<div class="t" style="left:370.95px;top:434px;font-weight:normal;font-size:10.6px;color:#000;transform:scaleX(1.0411);transform-origin:0 0;">A  Tuzemsk</div>
<div class="t" style="left:658.15px;top:434px;font-weight:normal;font-size:10.6px;color:#000;transform:scaleX(1.0151);transform-origin:0 0;">40 000.00</div>
<div class="t" style="left:763.14px;top:434px;font-weight:normal;font-size:10.6px;color:#000;transform:scaleX(1.0149);transform-origin:0 0;">8 400.00</div>
<div class="t" style="left:856.35px;top:434px;font-weight:normal;font-size:10.6px;color:#000;transform:scaleX(1.0108);transform-origin:0 0;">48 400.00</div>
<div class="t" style="left:88.46px;top:453px;font-weight:normal;font-size:10.6px;color:#000;transform:scaleX(0.9792);transform-origin:0 0;">2</div>
<div class="t" style="left:100.79px;top:453px;font-weight:normal;font-size:10.6px;color:#000;transform:scaleX(1.0349);transform-origin:0 0;">ř2</div>
<div class="t" style="left:342.57px;top:453px;font-weight:normal;font-size:10.6px;color:#000;transform:scaleX(1.0386);transform-origin:0 0;">15.0</div>
<div class="t" style="left:370.16px;top:453px;font-weight:normal;font-size:10.6px;color:#000;transform:scaleX(1.0536);transform-origin:0 0;">15 dodání z</div>
<div class="t" style="left:663.94px;top:453px;font-weight:normal;font-size:10.6px;color:#000;transform:scaleX(1.0198);transform-origin:0 0;">5 000.00</div>
<div class="t" style="left:771.43px;top:453px;font-weight:normal;font-size:10.6px;color:#000;transform:scaleX(1.0349);transform-origin:0 0;">750.00</div>
<div class="t" style="left:861.94px;top:453px;font-weight:normal;font-size:10.6px;color:#000;transform:scaleX(1.0198);transform-origin:0 0;">5 750.00</div>
<div style="position:absolute;left:59px;top:430px;width:15px;height:95px;box-sizing:border-box;background:#cacaca;border:1px solid #8797b0;border-radius:7px;box-shadow:inset 1px 0 0 #fff"></div>
<div style="position:absolute;left:60px;top:430px;width:13px;height:14px;box-sizing:border-box;background:#d2d2d2;border-top:1px solid #fff;border-left:1px solid #fff;border-bottom:1px solid #6f809c;border-radius:6px 6px 0 0"></div>
<div style="position:absolute;left:62px;top:435px;width:0;height:0;border-left:4.5px solid transparent;border-right:4.5px solid transparent;border-bottom:5px solid #5f7190"></div>
<div style="position:absolute;left:60px;top:511px;width:13px;height:14px;box-sizing:border-box;background:#d2d2d2;border-top:1px solid #6f809c;border-left:1px solid #fff;border-bottom:1px solid #fff;border-radius:0 0 6px 6px"></div>
<div style="position:absolute;left:62px;top:516px;width:0;height:0;border-left:4.5px solid transparent;border-right:4.5px solid transparent;border-top:5px solid #5f7190"></div>
<div style="position:absolute;left:66px;top:469px;width:2px;height:2px;background:#fff;box-shadow:1px 1px 0 #8d9bb3"></div>
<div style="position:absolute;left:63px;top:473px;width:2px;height:2px;background:#fff;box-shadow:1px 1px 0 #8d9bb3"></div>
<div style="position:absolute;left:66px;top:476px;width:2px;height:2px;background:#fff;box-shadow:1px 1px 0 #8d9bb3"></div>
<div style="position:absolute;left:63px;top:480px;width:2px;height:2px;background:#fff;box-shadow:1px 1px 0 #8d9bb3"></div>
<div style="position:absolute;left:66px;top:483px;width:2px;height:2px;background:#fff;box-shadow:1px 1px 0 #8d9bb3"></div>
<div class="t" style="left:556.22px;top:530px;font-weight:bold;font-size:11px;color:#000;transform:scaleX(1.0440);transform-origin:0 0;-webkit-text-stroke:0;">K úhradě</div>
<div class="in" style="left:610px;top:525px;width:98px;height:19px;background:#e9e9e9;"></div>
<div class="t" style="left:657.74px;top:529px;font-weight:normal;font-size:10.6px;color:#000;transform:scaleX(1.0237);transform-origin:0 0;">45 000.00</div>
<div class="in" style="left:709px;top:525px;width:98px;height:19px;background:#e9e9e9;"></div>
<div class="t" style="left:762.89px;top:529px;font-weight:normal;font-size:10.6px;color:#000;transform:scaleX(1.0186);transform-origin:0 0;">9 150.00</div>
<div class="in" style="left:808px;top:525px;width:98px;height:19px;background:#e9e9e9;"></div>
<div class="t" style="left:854.93px;top:529px;font-weight:normal;font-size:10.6px;color:#000;transform:scaleX(1.0389);transform-origin:0 0;">54 150.00</div>
<div style="position:absolute;left:62px;top:550px;width:850px;height:1px;box-sizing:border-box;background:#8a9ab2"></div>
<div style="position:absolute;left:62px;top:582px;width:850px;height:1px;box-sizing:border-box;background:#8a9ab2"></div>
<div class="t" style="left:64.34px;top:561px;font-weight:bold;font-size:11px;color:#000;transform:scaleX(1.0197);transform-origin:0 0;-webkit-text-stroke:0;">Evid. datum</div>
<div class="in" style="left:134px;top:557px;width:71px;height:19px;background:#fec2c2;"></div>
<div class="t" style="left:135.73px;top:561px;font-weight:normal;font-size:10.6px;color:#000;transform:scaleX(1.0317);transform-origin:0 0;">26.09.2018</div>
<div class="t" style="left:207.49px;top:561px;font-weight:bold;font-size:11px;color:#000;transform:scaleX(1.0857);transform-origin:0 0;-webkit-text-stroke:0;">Referent</div>
<div class="in" style="left:261px;top:557px;width:135px;height:19px;background:#fff;"></div>
<div class="t" style="left:263.64px;top:561px;font-weight:normal;font-size:10.6px;color:#000;transform:scaleX(1.0217);transform-origin:0 0;">Zaměstnanci BBM</div>
<div class="bt" style="left:60px;top:607px;width:79px;height:19px;border-right-color:#62748f;border-bottom-color:#62748f"><div class="bx" style="top:4px;color:#000"></div></div>
<div class="t" style="left:77.16px;top:611px;font-weight:normal;font-size:10.6px;color:#000;transform:scaleX(1.0493);transform-origin:0 0;">Uzavření</div>
<div class="bt" style="left:150px;top:607px;width:79px;height:19px;border-right-color:#8d9db5;border-bottom-color:#8d9db5"><div class="bx" style="top:4px;color:#7a89a3"></div></div>
<div class="t" style="left:165.89px;top:611px;font-weight:normal;font-size:10.6px;color:#7a89a3;transform:scaleX(1.0261);transform-origin:0 0;">Schválení</div>
<div class="bt" style="left:390px;top:607px;width:79px;height:19px;border-right-color:#8d9db5;border-bottom-color:#8d9db5"><div class="bx" style="top:4px;color:#7a89a3"></div></div>
<div class="t" style="left:409.08px;top:611px;font-weight:normal;font-size:10.6px;color:#7a89a3;transform:scaleX(1.0324);transform-origin:0 0;">Otevření</div>
<div class="bt" style="left:484px;top:607px;width:79px;height:19px;border-right-color:#62748f;border-bottom-color:#62748f"><div class="bx" style="top:4px;color:#000"></div></div>
<div class="t" style="left:506.89px;top:611px;font-weight:normal;font-size:10.6px;color:#000;transform:scaleX(1.0297);transform-origin:0 0;">Storno</div>
<div class="bt" style="left:637px;top:607px;width:79px;height:19px;border-right-color:#8d9db5;border-bottom-color:#8d9db5"><div class="bx" style="top:4px;color:#7a89a3"></div></div>
<div class="t" style="left:650.42px;top:611px;font-weight:normal;font-size:10.6px;color:#7a89a3;transform:scaleX(1.0356);transform-origin:0 0;">Fakturovat</div>
<div class="bt" style="left:736px;top:607px;width:79px;height:19px;border-right-color:#8d9db5;border-bottom-color:#8d9db5"><div class="bx" style="top:4px;color:#7a89a3"></div></div>
<div class="t" style="left:741.15px;top:611px;font-weight:normal;font-size:10.6px;color:#7a89a3;">Připojení pohl.</div>
<div class="bt" style="left:833px;top:608px;width:79px;height:19px;border-right-color:#62748f;border-bottom-color:#62748f"><div class="bx" style="top:4px;color:#000"></div></div>
<div class="t" style="left:853.44px;top:612px;font-weight:normal;font-size:10.6px;color:#000;transform:scaleX(1.0159);transform-origin:0 0;">Historie</div></body></html>
